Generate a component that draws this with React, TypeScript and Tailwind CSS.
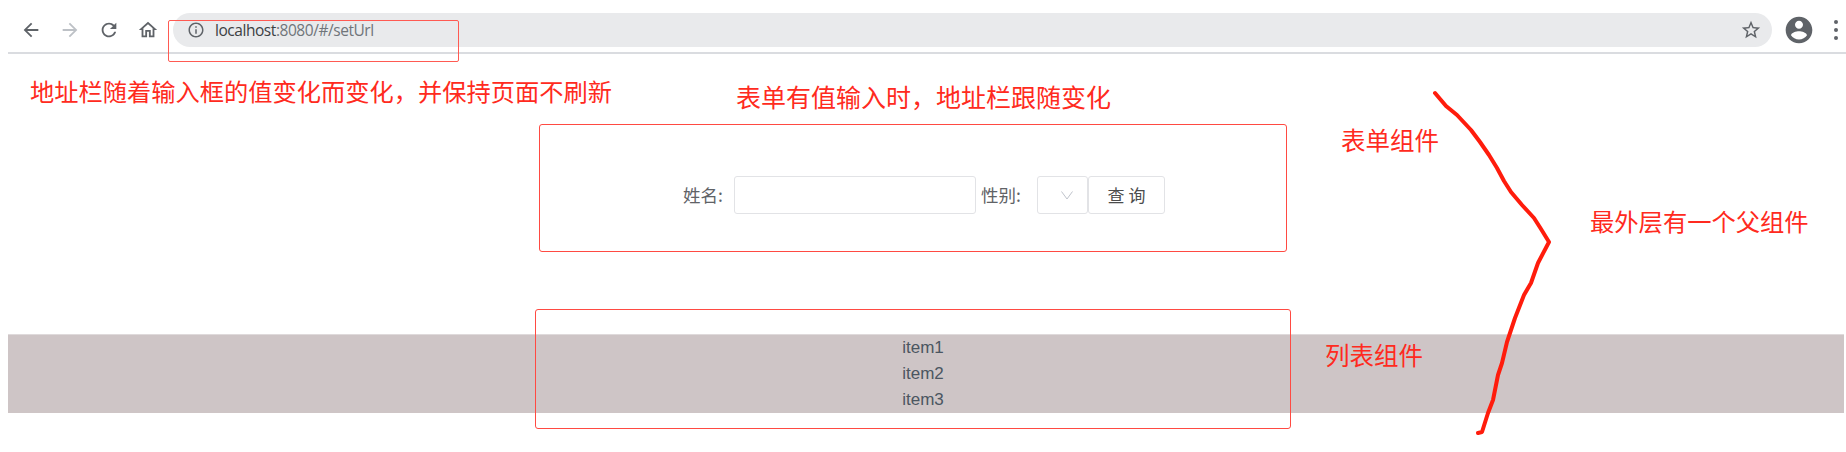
const cjk = "font-['Noto_Sans_CJK_SC','Liberation_Sans',sans-serif]";

function Glyph({ d, className }: { d: string; className: string }) {
  return (
    <svg viewBox="0 0 24 24" className={className} fill="currentColor">
      <path d={d} />
    </svg>
  );
}

const ARROW = 'M20 11H7.83l5.59-5.59L12 4l-8 8 8 8 1.41-1.41L7.83 13H20v-2z';
const RELOAD =
  'M17.65 6.35C16.2 4.9 14.21 4 12 4c-4.42 0-7.99 3.58-7.99 8s3.57 8 7.99 8c3.73 0 6.84-2.55 7.73-6h-2.08c-.82 2.33-3.04 4-5.65 4-3.31 0-6-2.69-6-6s2.69-6 6-6c1.66 0 3.14.69 4.22 1.78L13 11h7V4l-2.35 2.35z';
const HOME = 'M12 5.69l5 4.5V18h-2v-6H9v6H7v-7.81l5-4.5M12 3L2 12h3v8h6v-6h2v6h6v-8h3L12 3z';
const INFO =
  'M11 7h2v2h-2zm0 4h2v6h-2zm1-9C6.48 2 2 6.48 2 12s4.48 10 10 10 10-4.48 10-10S17.52 2 12 2zm0 18c-4.41 0-8-3.59-8-8s3.59-8 8-8 8 3.59 8 8-3.59 8-8 8z';
const STAR =
  'M22 9.24l-7.19-.62L12 2 9.19 8.63 2 9.24l5.46 4.73L5.82 21 12 17.27 18.18 21l-1.63-7.03L22 9.24zM12 15.4l-3.76 2.27 1-4.28-3.32-2.88 4.38-.38L12 6.1l1.71 4.04 4.38.38-3.32 2.88 1 4.28L12 15.4z';
const ACCOUNT =
  'M12 2C6.48 2 2 6.48 2 12s4.48 10 10 10 10-4.48 10-10S17.52 2 12 2zm0 3c1.66 0 3 1.34 3 3s-1.34 3-3 3-3-1.34-3-3 1.34-3 3-3zm0 14.2c-2.5 0-4.71-1.28-6-3.22.03-1.99 4-3.08 6-3.08 1.99 0 5.97 1.09 6 3.08-1.29 1.94-3.5 3.22-6 3.22z';

function Toolbar() {
  return (
    <div className="flex h-[52px] items-center pl-[20px] pr-[6px] pt-[8px]">
      <Glyph d={ARROW} className="h-[22px] w-[22px] text-[#5f6368]" />
      <Glyph d={ARROW} className="ml-[17px] h-[22px] w-[22px] rotate-180 text-[#bdc1c6]" />
      <Glyph d={RELOAD} className="ml-[17px] h-[22px] w-[22px] text-[#5f6368]" />
      <Glyph d={HOME} className="ml-[17px] h-[22px] w-[22px] text-[#5f6368]" />
      <div className="ml-[14px] flex h-[34px] w-[1599px] items-center rounded-full bg-[#e9eaec] pl-[14px] pr-[10px]">
        <Glyph d={INFO} className="h-[18px] w-[18px] text-[#5f6368]" />
        <span className="ml-[10px] pt-[2px] font-['Open_Sans',sans-serif] text-[15.5px] tracking-[-0.45px] text-[#70757a]">
          <span className="text-[#3c4043]">localhost</span>:8080/#/setUrl
        </span>
        <Glyph d={STAR} className="ml-auto h-[22px] w-[22px] text-[#5f6368]" />
      </div>
      <Glyph d={ACCOUNT} className="ml-[11px] h-[32px] w-[32px] text-[#5f6368]" />
      <div className="ml-[19px] flex flex-col gap-[4px]">
        <span className="h-[4px] w-[4px] rounded-full bg-[#5f6368]" />
        <span className="h-[4px] w-[4px] rounded-full bg-[#5f6368]" />
        <span className="h-[4px] w-[4px] rounded-full bg-[#5f6368]" />
      </div>
    </div>
  );
}

function SearchForm() {
  return (
    <div className={`ml-[539px] mt-[70px] flex h-[128px] w-[748px] items-center rounded-[3px] border border-[#ff4a42] pl-[143px] pt-[14px] text-[17.5px] text-[#606266] ${cjk}`}>
      <span className="w-[51px]">姓名:</span>
      <div className="h-[38px] w-[242px] rounded-[3px] border border-[#e2e3e6] bg-white" />
      <span className="ml-[5px] w-[56px]">性别:</span>
      <div className="flex h-[38px] w-[51px] items-center justify-end rounded-[3px] border border-[#e2e3e6] pr-[13px]">
        <svg viewBox="0 0 14 14" className="h-[14px] w-[14px] text-[#c0c4cc]" fill="none" stroke="currentColor">
          <path d="M1.5 3.5 7 11l5.5-7.5" />
        </svg>
      </div>
      <div className="flex h-[38px] w-[77px] items-center justify-center rounded-[3px] border border-[#e2e3e6] text-[17px] text-[#4c4c4c]">
        查 询
      </div>
    </div>
  );
}

function ItemList() {
  return (
    <div className="ml-[8px] mt-[82px] flex h-[79px] w-[1836px] flex-col items-center justify-center border-t border-[#dfdadb] bg-[#cec5c6] pr-[6px] font-['Liberation_Sans',sans-serif] text-[17px] leading-[26px] text-[#4b5661]">
      <div>item1</div>
      <div>item2</div>
      <div>item3</div>
    </div>
  );
}

const notes = [
  { text: '地址栏随着输入框的值变化而变化，并保持页面不刷新', cls: 'left-[30px] top-[74px] text-[24.25px]' },
  { text: '表单有值输入时，地址栏跟随变化', cls: 'left-[736px] top-[79px] text-[25px]' },
  { text: '表单组件', cls: 'left-[1341px] top-[123px] text-[24.5px]' },
  { text: '最外层有一个父组件', cls: 'left-[1590px] top-[204px] text-[24.3px]' },
  { text: '列表组件', cls: 'left-[1325px] top-[338px] text-[24.5px]' },
];

export default function App() {
  return (
    <div className="relative h-[452px] w-[1846px] overflow-hidden bg-white">
      <Toolbar />
      <div className="ml-[8px] h-[2px] bg-[#dadce0]" />
      <SearchForm />
      <ItemList />

      {/* annotations drawn over the screenshot */}
      <div className="absolute left-[168px] top-[20px] h-[42px] w-[291px] rounded-[2px] border border-[#ff5a52]" />
      <div className="absolute left-[535px] top-[309px] h-[120px] w-[756px] rounded-[3px] border border-[#ff4a42]" />
      {notes.map((note) => (
        <span
          key={note.text}
          className={`absolute whitespace-nowrap leading-[34px] text-[#ff2a20] ${cjk} ${note.cls}`}
        >
          {note.text}
        </span>
      ))}
      <svg viewBox="0 0 1846 452" className="absolute left-0 top-0 h-[452px] w-[1846px]" fill="none">
        <path
          d="M1435 93 1446 106 1457 115 1471 130 1480 142 1489 155 1497 168 1504 181 1511 192 1522 205 1534 218 1541 229 1549 242 1538 263 1531 283 1524 295 1515 318 1507 342 1502 363 1498 375 1493 400 1488 413 1482 432 1478 433"
          stroke="#ff1c0c"
          strokeWidth="4"
          strokeLinecap="round"
          strokeLinejoin="round"
        />
      </svg>
    </div>
  );
}
